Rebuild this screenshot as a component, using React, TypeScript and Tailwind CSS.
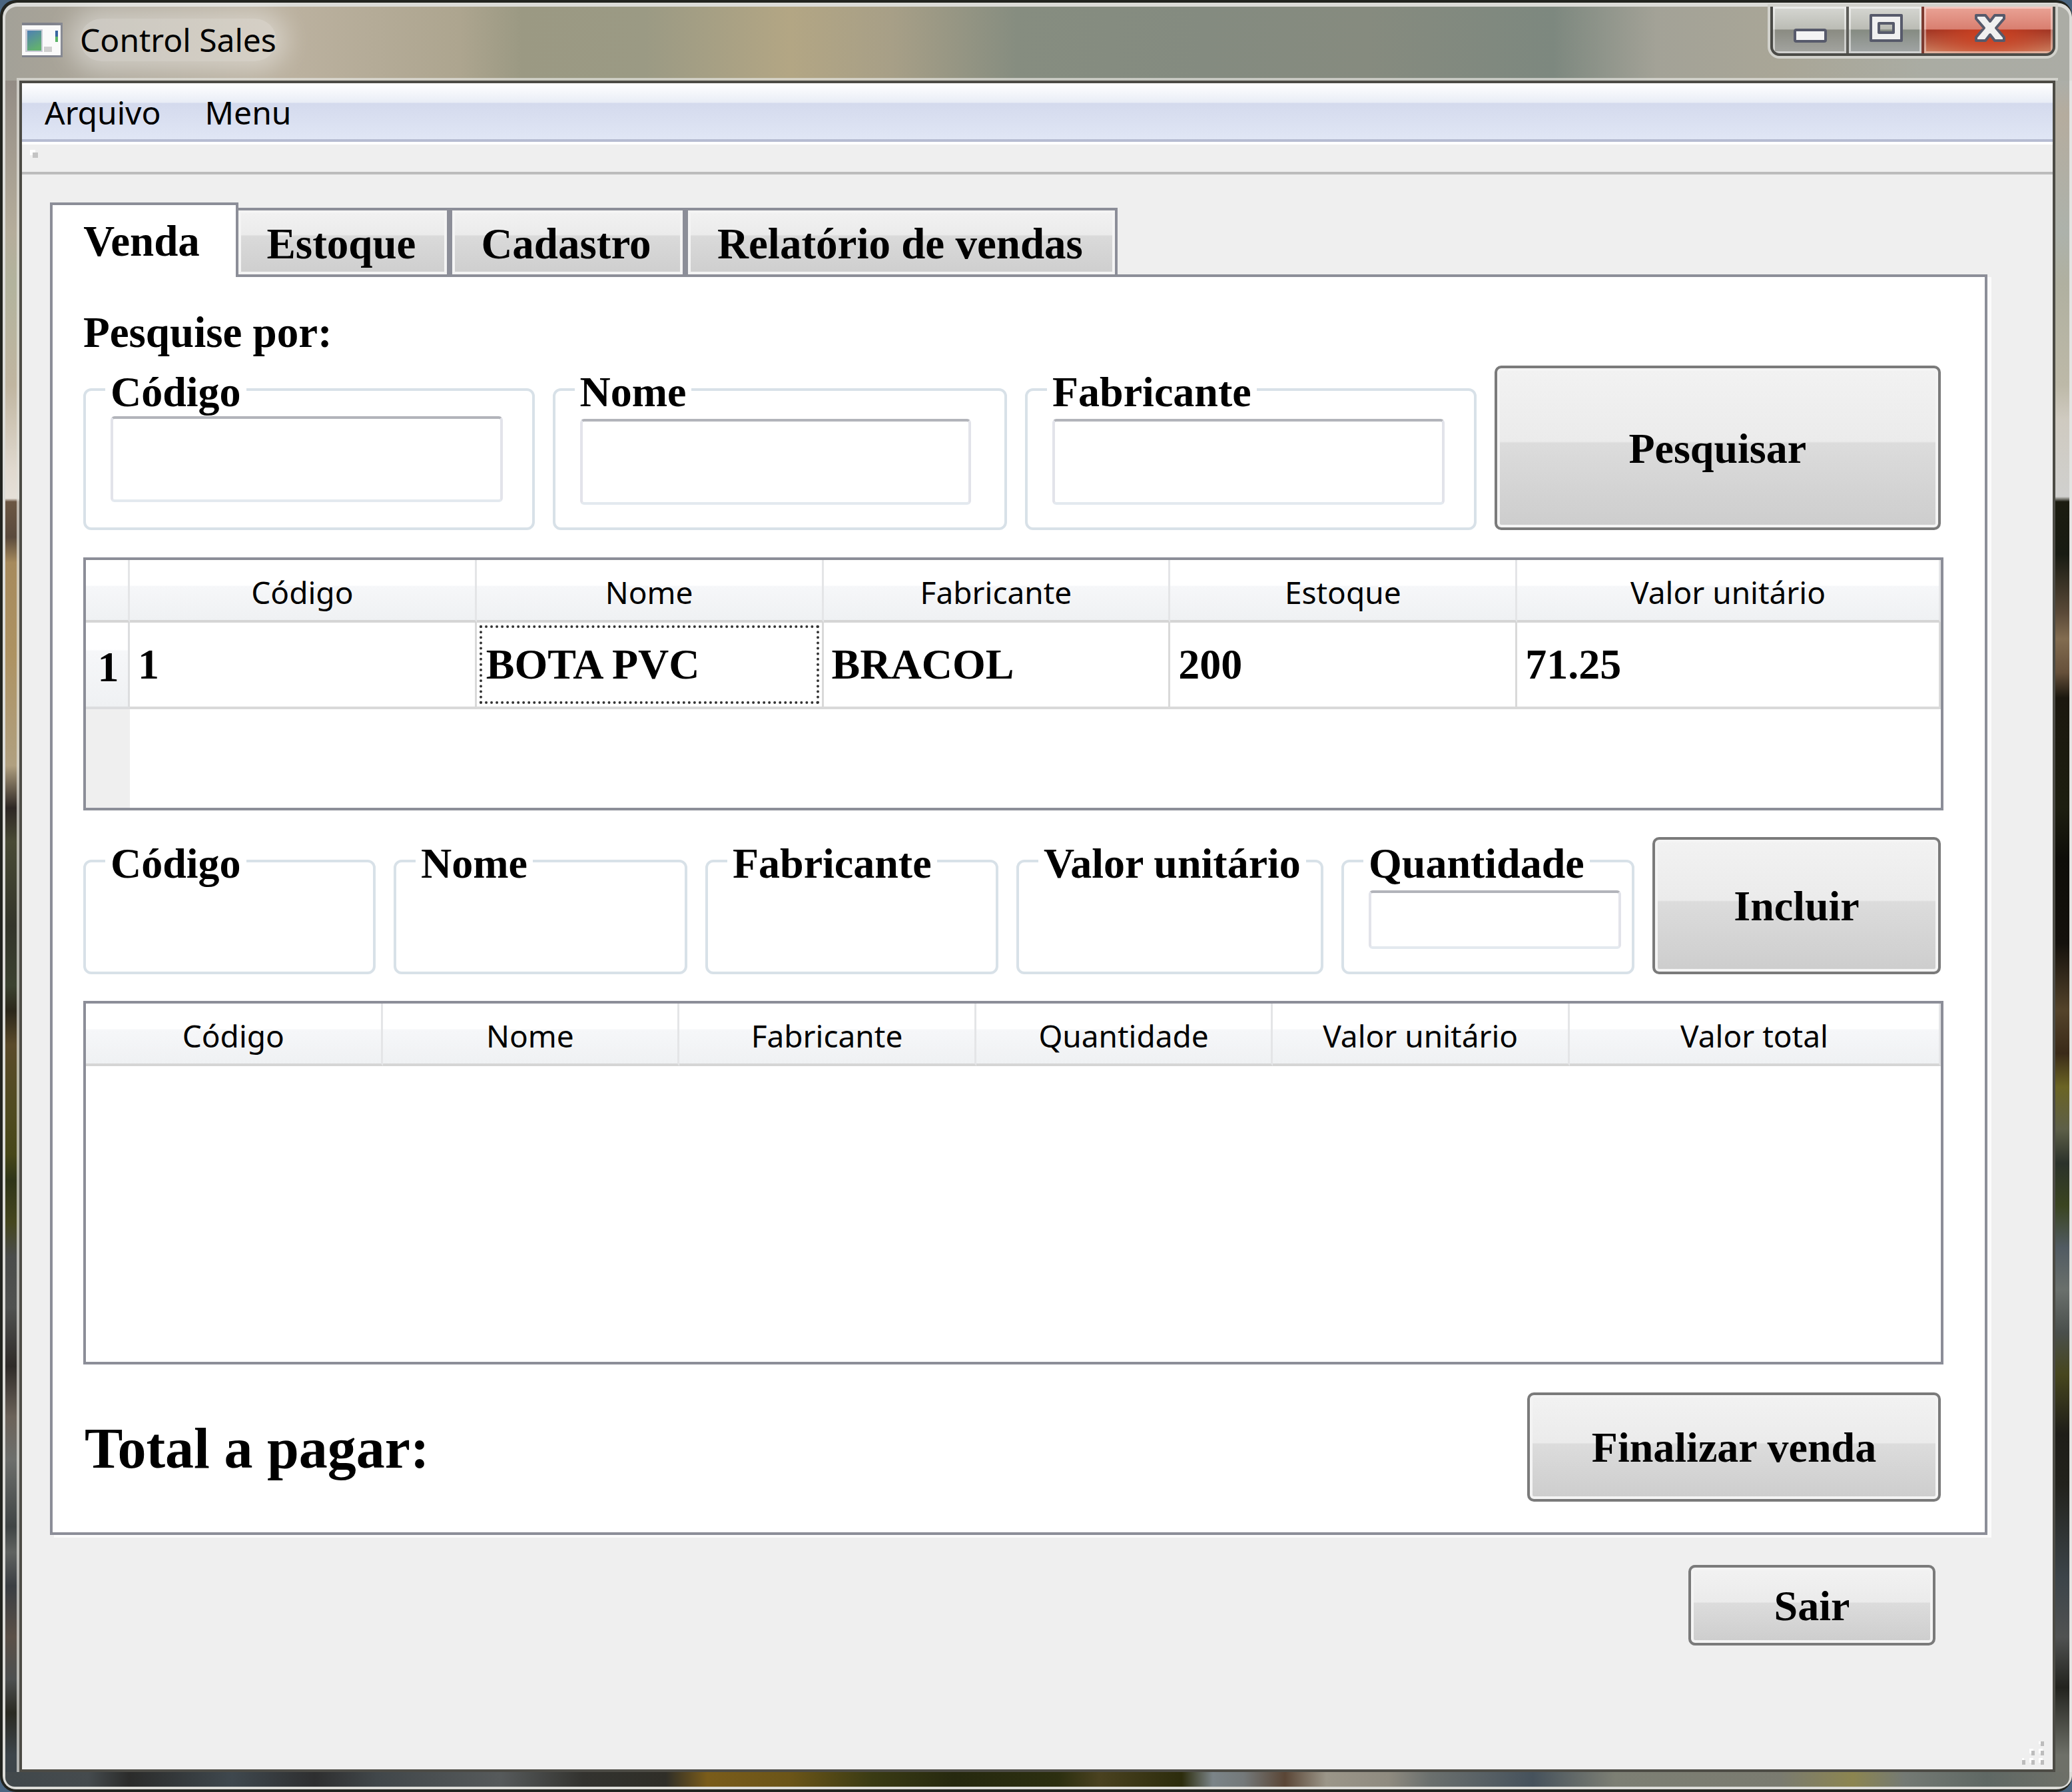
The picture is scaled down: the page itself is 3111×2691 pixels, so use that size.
import type { ReactNode } from "react";

const SERIF = "font-['Liberation_Serif','Times_New_Roman',serif] font-bold text-[64px] leading-[72px] text-black";

function Push({ children, className }: { children: ReactNode; className: string }) {
  return (
    <button
      type="button"
      className={
        "rounded-[10px] border-4 border-[#7a7a7a] bg-[linear-gradient(#f2f2f2_0%,#ebebeb_46%,#dcdcdc_47%,#cdcdcd_100%)] pt-[2px] shadow-[inset_0_0_0_4px_#f4f4f4] " +
        className
      }
    >
      {children}
    </button>
  );
}

function Group({
  label,
  id,
  className,
  inputClass,
}: {
  label: string;
  id: string;
  className: string;
  inputClass?: string;
}) {
  return (
    <fieldset className={"min-w-0 rounded-[12px] border-4 border-[#d8e1e8] pl-[29px] " + className}>
      <legend className="whitespace-nowrap px-2 pt-2 leading-[64px]">
        {inputClass ? <label htmlFor={id}>{label}</label> : label}
      </legend>
      {inputClass && (
        <input
          id={id}
          type="text"
          className={
            "ml-2 block rounded-[6px] border-4 border-x-[#e2e3ea] border-b-[#e3e9ef] border-t-[#b2b4ba] bg-white px-3 outline-none " +
            inputClass
          }
        />
      )}
    </fieldset>
  );
}

const HEAD =
  "h-[94px] border-b-4 border-r-[3px] border-b-[#d5d5d5] border-r-[#e4e5e7] bg-[linear-gradient(#ffffff_0%,#ffffff_42%,#f6f7f9_44%,#eff1f3_100%)] p-0 pt-[6px] text-center align-middle font-['Noto_Sans','Open_Sans',sans-serif] text-[46px] font-normal leading-[56px]";
const CELL = "h-[128px] border-b-4 border-r-[3px] border-[#d9d9d9] p-0 pl-[12px] text-left align-middle";

export default function App() {
  return (
    <div className={"flex min-h-screen flex-col bg-[#4a6580] " + SERIF}>
      <div className="flex flex-1 flex-col overflow-hidden rounded-[24px] border-4 border-r-0 border-[#22241f] bg-[#22241f]">
        <header className="flex h-[117px] shrink-0 items-start justify-between rounded-t-[22px] border-x-4 border-t-[6px] border-[#dcdcd8] bg-[linear-gradient(90deg,#a3a198_0%,#a9a498_3%,#bbb19f_14%,#ada58f_22%,#9b9983_25%,#9b9a84_31%,#b3a684_38%,#a79f87_43%,#868d80_49%,#848b80_58%,#868b7f_66%,#7d887f_75%,#a3a297_80%,#a9a697_86%,#aaaca3_93%,#abaca5_100%)]">
          <div className="flex items-center gap-[25px] pl-[25px] pt-[18px]">
            <svg className="h-[64px] w-[62px]" viewBox="0 0 62 64" aria-hidden="true">
              <defs>
                <linearGradient id="pic" x1="0" y1="0" x2="0.4" y2="1">
                  <stop offset="0" stopColor="#4f80b4" />
                  <stop offset="1" stopColor="#62b070" />
                </linearGradient>
              </defs>
              <rect x="0" y="6" width="61" height="52" fill="#7f828c" />
              <rect x="0" y="10" width="58" height="45" fill="#fafafa" />
              <rect x="5" y="16" width="26" height="34" fill="#c9ccd6" />
              <rect x="8" y="18" width="21" height="30" fill="url(#pic)" />
              <rect x="50" y="18" width="4" height="9" fill="#31609c" />
              <rect x="50" y="27" width="4" height="8" fill="#54b060" />
              <rect x="33" y="42" width="12" height="8" fill="#cfcfcf" />
            </svg>
            <h1 className="rounded-full bg-white/40 font-['Noto_Sans','Open_Sans',sans-serif] text-[48px] font-normal leading-[64px] shadow-[0_0_36px_16px_rgba(255,255,255,0.4)]">
              Control Sales
            </h1>
          </div>
          <div className="mr-[21px] flex h-[74px] overflow-hidden rounded-b-[14px] border-4 border-t-0 border-[#4b4b47] shadow-[0_0_0_4px_#d2d2cc]">
            <button
              type="button"
              aria-label="Minimizar"
              className="flex w-[114px] items-start justify-center border-r-4 border-[#5d5d59] bg-[linear-gradient(#d6d7d2_0%,#bbbcb5_48%,#8a8b82_50%,#a4a5a1_100%)] shadow-[inset_0_0_0_3px_rgba(255,255,255,0.5)]"
            >
              <svg className="h-[60px] w-[60px]" viewBox="0 2 60 60" aria-hidden="true">
                <rect x="8" y="37" width="46" height="17" rx="2" fill="#f4f4f4" stroke="#575a6b" strokeWidth="4" />
              </svg>
            </button>
            <button
              type="button"
              aria-label="Maximizar"
              className="flex w-[113px] items-start justify-center border-r-4 border-[#7c3a30] bg-[linear-gradient(#d6d7d2_0%,#bbbcb5_48%,#858b82_50%,#a2a6a6_100%)] shadow-[inset_0_0_0_3px_rgba(255,255,255,0.5)]"
            >
              <svg className="h-[60px] w-[60px]" viewBox="0 2 60 60" aria-hidden="true">
                <path
                  d="M8 15h46v38H8zM20 27v14h22V27z"
                  fill="#f0f0f0"
                  fillRule="evenodd"
                  stroke="#575a6b"
                  strokeWidth="4"
                  strokeLinejoin="round"
                />
              </svg>
            </button>
            <button
              type="button"
              aria-label="Fechar"
              className="flex w-[193px] items-start justify-center bg-[linear-gradient(#eaa396_0%,#d97f70_48%,transparent_50%),radial-gradient(ellipse_at_50%_60%,#d0401f_0%,transparent_75%),linear-gradient(#9c3424_50%,#cf8060_100%)] shadow-[inset_0_0_0_3px_rgba(255,255,255,0.4)]"
            >
              <svg className="h-[60px] w-[60px]" viewBox="-2 2 60 60" aria-hidden="true">
                <path
                  d="M9 15h14l7 9 7-9h14v5L39 34l12 14v5H37l-7-9-7 9H9v-5l12-14L9 20z"
                  fill="#f0f0f0"
                  stroke="#575a6b"
                  strokeWidth="4"
                  strokeLinejoin="round"
                />
              </svg>
            </button>
          </div>
        </header>

        <div className="flex flex-1">
          <div className="w-[25px] shrink-0 border-l-4 border-[#dcdcd8] bg-[linear-gradient(#938c85_0%,#b5ad9b_9%,#b2b39d_12%,#c0b5a0_18%,#e0d9cf_23%,#e5e0d8_24.7%,#6b5743_24.9%,#5a4a3c_27%,#a68a5c_28.5%,#ad9262_34%,#b0a080_40.5%,#2d2724_43%,#484a35_45%,#33352a_50%,#3b4230_53.5%,#2b271a_55%,#5a4a2a_57%,#4f4a20_61%,#474718_63.5%,#2f3518_65%,#45461e_67.5%,#4a4c4a_69.5%,#505250_72.5%,#2e2b28_76%,#6b6259_79%,#6d6f6c_81.5%,#3f4444_85.5%,#606360_87%,#3a3e42_89%,#5a5047_92%,#4d5050_94.5%,#2a2a22_96.5%,#3d454a_99%)]" />
          <main className="flex min-w-0 flex-1 flex-col border-4 border-[#4c4b45] bg-[#efefef] shadow-[0_0_0_4px_rgba(225,225,220,0.7)]">
            <nav className="flex h-[88px] shrink-0 items-start gap-[66px] border-b-4 border-[#b6bcd2] bg-[linear-gradient(#ffffff_0%,#e9edf6_34%,#d4daed_36%,#e0e6f5_100%)] pl-[34px] pt-[12px] font-['Noto_Sans','Open_Sans',sans-serif] text-[48px] font-normal leading-[64px]">
              <button type="button">Arquivo</button>
              <button type="button">Menu</button>
            </nav>
            <div className="h-[49px] shrink-0 border-b-4 border-t-4 border-b-[#bcbcbc] border-t-white pl-[16px] pt-[12px]">
              <div className="h-2 w-2 bg-[#c4c4c4] shadow-[-4px_-4px_0_#ffffff]" />
            </div>

            <div className="ml-[42px] mr-[98px] mt-[42px]">
              <div role="tablist" className="flex h-[112px] items-end text-[65px]">
                <button
                  type="button"
                  role="tab"
                  aria-selected="true"
                  className="relative z-10 h-[112px] w-[283px] border-4 border-b-0 border-[#8c8e98] bg-white pr-2"
                >
                  Venda
                </button>
                {[
                  ["Estoque", "w-[317px] border-l-0"],
                  ["Cadastro", "w-[354px]"],
                  ["Relatório de vendas", "w-[649px]"],
                ].map(([name, cls]) => (
                  <button
                    key={name}
                    type="button"
                    role="tab"
                    aria-selected="false"
                    className={
                      "h-[104px] border-4 border-[#8c8e98] bg-[linear-gradient(#f2f2f2_0%,#ebebeb_38%,#dadada_40%,#cecece_100%)] pr-1 pt-1 shadow-[inset_0_0_0_4px_#f4f4f4] " +
                      cls
                    }
                  >
                    {name}
                  </button>
                ))}
              </div>

              <section className="-mt-1 border-4 border-[#8c8e98] bg-white pb-[46px] pl-[46px] pr-[62px] pt-[47px] shadow-[6px_4px_0_#fbfbfb]">
                <p className="text-[65px]">Pesquise por:</p>
                <form className="mr-1 mt-[14px] grid grid-cols-[676fr_681fr_676fr_669fr] gap-[27px]">
                  <Group label="Código" id="s-cod" className="h-[247px]" inputClass="mt-[4px] h-[129px] w-[92%]" />
                  <Group label="Nome" id="s-nome" className="h-[247px]" inputClass="mt-[8px] h-[129px] w-[91%]" />
                  <Group label="Fabricante" id="s-fab" className="h-[247px]" inputClass="mt-[8px] h-[129px] w-[92%]" />
                  <Push className="h-[247px]">Pesquisar</Push>
                </form>

                <div className="mt-[41px] flex h-[380px] flex-col border-4 border-[#8c8e98]">
                  <table className="w-full table-fixed border-separate border-spacing-0">
                    <colgroup>
                      <col className="w-[66px]" />
                      <col className="w-[18.7%]" />
                      <col className="w-[18.7%]" />
                      <col className="w-[18.7%]" />
                      <col className="w-[18.7%]" />
                      <col />
                    </colgroup>
                    <thead>
                      <tr>
                        <td className={HEAD} />
                        {["Código", "Nome", "Fabricante", "Estoque", "Valor unitário"].map((h) => (
                          <th key={h} scope="col" className={HEAD}>
                            {h}
                          </th>
                        ))}
                      </tr>
                    </thead>
                    <tbody>
                      <tr>
                        <th
                          scope="row"
                          className="border-b-4 border-r-[3px] border-[#dcdddf] bg-[linear-gradient(#ffffff_0%,#ffffff_32%,#f6f7f9_34%,#eff1f3_100%)] p-0 pl-1 pt-2 text-center align-middle"
                        >
                          1
                        </th>
                        <td className={CELL}>1</td>
                        <td className="h-[128px] border-b-4 border-r-[3px] border-[#d9d9d9] p-1 align-middle">
                          <div className="flex h-[118px] items-center border-4 border-dotted border-[#333333] pl-[6px]">BOTA PVC</div>
                        </td>
                        <td className={CELL}>BRACOL</td>
                        <td className={CELL}>200</td>
                        <td className={CELL}>71.25</td>
                      </tr>
                    </tbody>
                  </table>
                  <div className="w-[66px] flex-1 bg-[#efefef]" />
                </div>

                <form className="mr-1 mt-[40px] grid grid-cols-[438fr_440fr_439fr_460fr_439fr_432fr] gap-[27px]">
                  <Group label="Código" id="i-cod" className="h-[206px]" />
                  <Group label="Nome" id="i-nome" className="h-[206px]" />
                  <Group label="Fabricante" id="i-fab" className="h-[206px]" />
                  <Group label="Valor unitário" id="i-val" className="h-[206px]" />
                  <Group label="Quantidade" id="i-qtd" className="h-[206px]" inputClass="mt-[8px] h-[88px] w-[94%]" />
                  <Push className="h-[206px]">Incluir</Push>
                </form>

                <div className="mt-[40px] h-[546px] border-4 border-[#8c8e98]">
                  <table className="w-full table-fixed border-separate border-spacing-0">
                    <colgroup>
                      <col className="w-[16%]" />
                      <col className="w-[16%]" />
                      <col className="w-[16%]" />
                      <col className="w-[16%]" />
                      <col className="w-[16%]" />
                      <col />
                    </colgroup>
                    <thead>
                      <tr>
                        {["Código", "Nome", "Fabricante", "Quantidade", "Valor unitário", "Valor total"].map((h) => (
                          <th key={h} scope="col" className={HEAD}>
                            {h}
                          </th>
                        ))}
                      </tr>
                    </thead>
                  </table>
                </div>

                <div className="mr-1 mt-[42px] flex items-center justify-between">
                  <p className="pl-[2px] pt-1 text-[86px] leading-[96px]">Total a pagar:</p>
                  <Push className="h-[164px] w-[621px]">Finalizar venda</Push>
                </div>
              </section>
            </div>

            <div className="mr-[176px] mt-[45px] flex justify-end">
              <Push className="h-[121px] w-[371px]">Sair</Push>
            </div>

            <div className="mt-auto flex justify-end pb-[6px] pr-[10px]">
              <svg className="h-[36px] w-[36px]" viewBox="0 0 36 36" aria-hidden="true">
                <path d="M25 -3h6v7h-6zM11 11h6v7h-6zM25 11h6v7h-6zM-3 25h6v7h-6zM11 25h6v7h-6zM25 25h6v7h-6z" fill="#ffffff" />
                <path d="M28 0h5v7h-5zM14 14h5v7h-5zM28 14h5v7h-5zM0 28h5v7H0zM14 28h5v7h-5zM28 28h5v7h-5z" fill="#bcbcbc" />
              </svg>
            </div>
          </main>
          <div className="w-[25px] shrink-0 border-r-4 border-[#e4e4e2] bg-[linear-gradient(#acaea8_0%,#b5ac9e_2%,#adb2ab_9%,#b0b0a0_12%,#bdb9a8_18%,#cfcac0_20%,#d0d0ce_24.6%,#1c1c10_24.9%,#181b12_28%,#5b4a38_31.5%,#826c50_33%,#66503a_35%,#1b170e_36.5%,#1d1e10_43%,#0e0d08_46%,#14110c_51%,#54432a_55%,#3a2a18_57.5%,#6b6424_59.5%,#5d5f48_62%,#2b322a_64%,#3a4420_66.5%,#515b62_69%,#6a706c_71.5%,#4a4f4c_74%,#47461e_76.5%,#1e1d18_80%,#22221c_83%,#3c4449_88.5%,#505252_92%,#22231e_95%,#6e7068_99%)]" />
        </div>
        <div className="h-[26px] shrink-0 rounded-b-[18px] border-x-4 border-b-4 border-[#dcdcd8] bg-[linear-gradient(90deg,#41484b_0%,#454b4e_4%,#2b2c2b_6%,#3f484e_11%,#2e2f30_15%,#41474a_18%,#565a5b_24%,#33332f_28%,#2f2e28_32%,#7a5c1a_34%,#6b5518_38%,#3a3b14_42%,#26290f_46%,#2c2f10_51%,#4a4220_53%,#2c2c0c_57%,#7b8488_58.5%,#74797a_60%,#5a4636_62%,#9b9689_64%,#8f8b80_67%,#6b706e_69%,#46525c_74%,#7d7f74_78%,#7a7b70_86%,#8c8550_89.5%,#747a74_92%,#5f6864_96%,#6e7068_100%)]" />
      </div>
    </div>
  );
}
